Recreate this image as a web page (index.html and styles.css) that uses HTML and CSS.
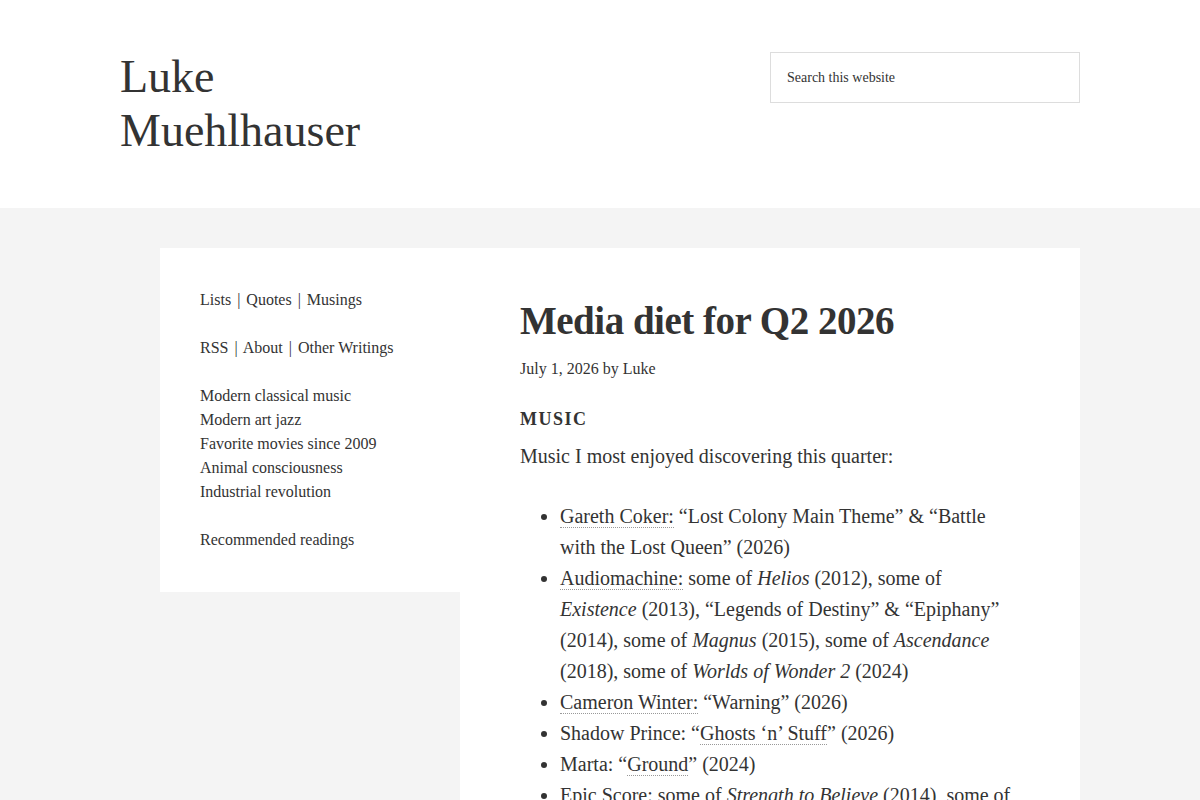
FILE: index.html
```html
<!DOCTYPE html>
<html lang="en">
<head>
<meta charset="utf-8">
<title>Media diet for Q2 2026 – Luke Muehlhauser</title>
<link rel="stylesheet" href="styles.css">
</head>
<body>
<header class="site-header">
  <div class="header-inner">
    <p class="site-title"><a href="#">Luke Muehlhauser</a></p>
    <form class="search-form">
      <input class="search-input" type="search" placeholder="Search this website">
    </form>
  </div>
</header>

<div class="site-inner">
  <aside class="sidebar">
    <p class="nav-line"><a href="#">Lists</a> <span class="sep">|</span> <a href="#">Quotes</a> <span class="sep">|</span> <a href="#">Musings</a></p>
    <p class="nav-line"><a href="#">RSS</a> <span class="sep">|</span> <a href="#">About</a> <span class="sep">|</span> <a href="#">Other Writings</a></p>
    <ul class="topic-list">
      <li><a href="#">Modern classical music</a></li>
      <li><a href="#">Modern art jazz</a></li>
      <li><a href="#">Favorite movies since 2009</a></li>
      <li><a href="#">Animal consciousness</a></li>
      <li><a href="#">Industrial revolution</a></li>
    </ul>
    <p class="nav-line"><a href="#">Recommended readings</a></p>
  </aside>

  <main class="content">
    <article class="entry">
      <h1 class="entry-title">Media diet for Q2 2026</h1>
      <p class="entry-meta">July 1, 2026 by <a href="#">Luke</a></p>
      <h2 class="section-title">Music</h2>
      <p class="lead">Music I most enjoyed discovering this quarter:</p>
      <ul class="media-list">
        <li><a class="ref" href="#">Gareth Coker:</a> “Lost Colony Main Theme” &amp; “Battle with the Lost Queen” (2026)</li>
        <li><a class="ref" href="#">Audiomachine:</a> some of <em>Helios</em> (2012), some of <em>Existence</em> (2013), “Legends of Destiny” &amp; “Epiphany” (2014), some of <em>Magnus</em> (2015), some of <em>Ascendance</em> (2018), some of <em>Worlds of Wonder 2</em> (2024)</li>
        <li><a class="ref" href="#">Cameron Winter:</a> “Warning” (2026)</li>
        <li>Shadow Prince: “<a class="ref" href="#">Ghosts ‘n’ Stuff</a>” (2026)</li>
        <li>Marta: “<a class="ref" href="#">Ground</a>” (2024)</li>
        <li>Epic Score: some of <em>Strength to Believe</em> (2014), some of <em>Rise to Glory</em> (2015)</li>
      </ul>
    </article>
  </main>
</div>
</body>
</html>
```

FILE: styles.css
```css
* {
  box-sizing: border-box;
}

html, body {
  margin: 0;
  padding: 0;
}

body {
  background: #f4f4f4;
  color: #333;
  font-family: "Liberation Serif", "Times New Roman", serif;
  font-size: 16px;
  line-height: 1.5;
}

a {
  color: #333;
  text-decoration: none;
}

p {
  margin: 0;
}

/* Header */

.site-header {
  background: #fff;
  height: 208px;
}

.header-inner {
  width: 960px;
  margin: 0 auto;
  display: flex;
  justify-content: space-between;
  align-items: flex-start;
  padding-top: 50px;
}

.site-title {
  width: 300px;
  font-size: 46px;
  line-height: 54px;
  font-weight: 400;
  margin: 0;
}

.search-form {
  margin: 2px 0 0;
}

.search-input {
  width: 310px;
  height: 51px;
  border: 1px solid #ddd;
  background: #fff;
  padding: 0 16px;
  font-family: "Liberation Serif", "Times New Roman", serif;
  font-size: 14px;
  color: #333;
  outline: none;
}

.search-input::placeholder {
  color: #333;
  opacity: 1;
}

/* Body columns */

.site-inner {
  width: 960px;
  margin: 40px auto 0;
  padding-left: 40px;
  display: flex;
  align-items: flex-start;
}

.sidebar {
  width: 300px;
  background: #fff;
  padding: 40px 40px 40px;
  font-size: 16px;
  line-height: 24px;
}

.sep {
  color: #333;
  padding: 0 2px;
}

.nav-line {
  margin-bottom: 24px;
}

.nav-line:last-child {
  margin-bottom: 0;
}

.topic-list {
  list-style: none;
  margin: 0 0 24px;
  padding: 0;
}

.content {
  flex: 1;
  background: #fff;
  padding: 50px 60px 60px;
  min-height: 600px;
}

.entry-title {
  font-size: 39px;
  line-height: 46px;
  font-weight: 700;
  margin: 0 0 13px;
  letter-spacing: -0.5px;
}

.entry-meta {
  font-size: 16px;
  line-height: 24px;
  margin-bottom: 24px;
}

.section-title {
  font-size: 18px;
  font-weight: 700;
  text-transform: uppercase;
  letter-spacing: 1.5px;
  line-height: 28px;
  margin: 0 0 8px;
}

.lead {
  font-size: 20px;
  line-height: 31px;
  margin-bottom: 29px;
}

.media-list {
  margin: 0;
  padding-left: 40px;
  font-size: 20px;
  line-height: 31px;
}

.ref {
  border-bottom: 1px dotted #999;
}
```
